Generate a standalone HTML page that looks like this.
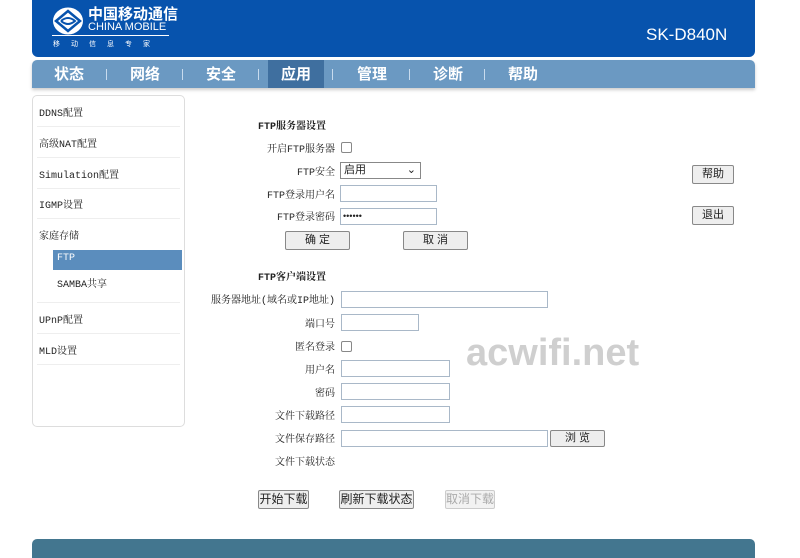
<!DOCTYPE html>
<html><head><meta charset="utf-8"><style>
*{margin:0;padding:0;box-sizing:border-box}
body{width:800px;height:558px;background:#fff;position:relative;overflow:hidden;font-family:"Liberation Sans","Noto Sans CJK SC",sans-serif;font-size:11px;color:#222}
.abs{position:absolute}
#hdr{left:32px;top:0;width:723px;height:57px;background:#0753ad;border-radius:0 0 6px 6px}
#nav{left:32px;top:60px;width:723px;height:28px;background:#6b99c2;border-radius:5px 5px 0 0;box-shadow:0 2px 3px #ccc}
.nv{top:0;height:28px;line-height:28px;color:#fff;font-weight:bold;font-size:15px;font-family:"Noto Sans CJK SC",sans-serif}
.sep{top:9px;width:1px;height:11px;background:#c8dbee}
#side{left:32px;top:95px;width:153px;height:332px;border:1px solid #ddd;border-radius:5px;background:#fff}
.si{position:absolute;left:6px;font-family:"Liberation Mono","Noto Serif CJK SC",monospace;font-size:10px;color:#222}
.sl{position:absolute;left:4px;width:143px;height:1px;background:#eee}
.lb{position:absolute;text-align:right;font-family:"Liberation Mono","Noto Serif CJK SC",monospace;font-size:10px;color:#222}
.in{position:absolute;height:17px;border:1px solid #a9b8c8;background:#fff}
.cb{position:absolute;width:11px;height:11px;border:1px solid #888;border-radius:2px;background:#fff}
.bt{position:absolute;border:1px solid #888;background:#eee;font-size:11px;text-align:center;line-height:17px;height:19px;border-radius:2px}
.h{position:absolute;font-weight:bold;font-family:"Liberation Mono","Noto Serif CJK SC",monospace;font-size:10px}
</style></head><body>
<div id="hdr" class="abs">
 <svg class="abs" style="left:19px;top:6px" width="34" height="30" viewBox="0 0 34 30"><ellipse cx="17" cy="15" rx="15" ry="13.5" fill="#fff"/><path d="M5 15 L17 5 L29 15 L17 25Z" fill="none" stroke="#0753ad" stroke-width="2.5"/><path d="M10 15 Q17 9 24 15 Q17 21 10 15" fill="none" stroke="#0753ad" stroke-width="2"/></svg>
 <div class="abs" style="left:56px;top:5px;color:#fff;font-size:15px;font-weight:bold;font-family:'Noto Sans CJK SC',sans-serif;line-height:17px">中国移动通信</div>
 <div class="abs" style="left:56px;top:22px;color:#fff;font-size:11px;line-height:11px">CHINA MOBILE</div>
 <div class="abs" style="left:20px;top:35px;width:117px;height:1px;background:#fff"></div>
 <div class="abs" style="left:21px;top:39px;color:#fff;font-size:7px;letter-spacing:11px;font-family:'Noto Sans CJK SC',sans-serif">移动信息专家</div>
 <div class="abs" style="left:614px;top:25px;color:#fff;font-size:17px">SK-D840N</div>
</div>
<div id="nav" class="abs">
 <div class="abs" style="left:236px;top:0;width:56px;height:28px;background:#3f6f9f"></div>
 <div class="nv abs" style="left:22px">状态</div><div class="sep abs" style="left:74px"></div>
 <div class="nv abs" style="left:98px">网络</div><div class="sep abs" style="left:150px"></div>
 <div class="nv abs" style="left:174px">安全</div><div class="sep abs" style="left:226px"></div>
 <div class="nv abs" style="left:249px">应用</div><div class="sep abs" style="left:300px"></div>
 <div class="nv abs" style="left:325px">管理</div><div class="sep abs" style="left:377px"></div>
 <div class="nv abs" style="left:401px">诊断</div><div class="sep abs" style="left:452px"></div>
 <div class="nv abs" style="left:476px">帮助</div>
</div>
<div id="side" class="abs">
 <div class="si" style="top:8px">DDNS配置</div><div class="sl" style="top:30px"></div>
 <div class="si" style="top:39px">高级NAT配置</div><div class="sl" style="top:61px"></div>
 <div class="si" style="top:70px">Simulation配置</div><div class="sl" style="top:92px"></div>
 <div class="si" style="top:100px">IGMP设置</div><div class="sl" style="top:122px"></div>
 <div class="si" style="top:131px">家庭存储</div>
 <div class="abs" style="left:20px;top:154px;width:129px;height:20px;background:#5b8dbd"></div>
 <div class="si" style="left:24px;top:157px;color:#fff">FTP</div>
 <div class="si" style="left:24px;top:179px">SAMBA共享</div><div class="sl" style="top:206px"></div>
 <div class="si" style="top:215px">UPnP配置</div><div class="sl" style="top:237px"></div>
 <div class="si" style="top:246px">MLD设置</div><div class="sl" style="top:268px"></div>
</div>
<div class="h" style="left:258px;top:117px">FTP服务器设置</div>
<div class="lb" style="left:200px;width:135px;top:140px">开启FTP服务器</div><div class="cb" style="left:341px;top:142px"></div>
<div class="lb" style="left:200px;width:135px;top:163px">FTP安全</div>
<div class="in" style="left:340px;top:162px;width:81px;border-color:#888;font-size:11px;padding-left:3px;line-height:15px">启用<span style="position:absolute;right:4px;top:0">&#8964;</span></div>
<div class="lb" style="left:200px;width:135px;top:186px">FTP登录用户名</div><div class="in" style="left:340px;top:185px;width:97px"></div>
<div class="lb" style="left:200px;width:135px;top:208px">FTP登录密码</div><div class="in" style="left:340px;top:208px;width:97px;font-size:9px;line-height:14px;padding-left:2px">••••••</div>
<div class="bt" style="left:285px;top:231px;width:65px">确 定</div>
<div class="bt" style="left:403px;top:231px;width:65px">取 消</div>
<div class="bt" style="left:692px;top:165px;width:42px">帮助</div>
<div class="bt" style="left:692px;top:206px;width:42px">退出</div>
<div class="h" style="left:258px;top:268px">FTP客户端设置</div>
<div class="lb" style="left:195px;width:140px;top:291px">服务器地址(域名或IP地址)</div><div class="in" style="left:341px;top:291px;width:207px"></div>
<div class="lb" style="left:200px;width:135px;top:315px">端口号</div><div class="in" style="left:341px;top:314px;width:78px"></div>
<div class="lb" style="left:200px;width:135px;top:338px">匿名登录</div><div class="cb" style="left:341px;top:341px"></div>
<div class="lb" style="left:200px;width:135px;top:361px">用户名</div><div class="in" style="left:341px;top:360px;width:109px"></div>
<div class="lb" style="left:200px;width:135px;top:384px">密码</div><div class="in" style="left:341px;top:383px;width:109px"></div>
<div class="lb" style="left:200px;width:135px;top:407px">文件下载路径</div><div class="in" style="left:341px;top:406px;width:109px"></div>
<div class="lb" style="left:200px;width:135px;top:430px">文件保存路径</div><div class="in" style="left:341px;top:430px;width:207px"></div>
<div class="bt" style="left:550px;top:430px;width:55px;height:17px;line-height:15px">浏 览</div>
<div class="lb" style="left:200px;width:135px;top:453px">文件下载状态</div>
<div class="bt" style="left:258px;top:490px;width:51px;font-size:12px">开始下载</div>
<div class="bt" style="left:339px;top:490px;width:75px;font-size:12px">刷新下载状态</div>
<div class="bt" style="left:445px;top:490px;width:50px;font-size:12px;color:#aaa;border-color:#ccc;background:#f2f2f2">取消下载</div>
<div class="abs" style="left:466px;top:332px;font-size:38px;color:rgba(160,160,160,.5);font-weight:bold">acwifi.net</div>
<div class="abs" style="left:32px;top:539px;width:723px;height:19px;background:#43768f;border-radius:5px 5px 0 0"></div>
</body></html>
